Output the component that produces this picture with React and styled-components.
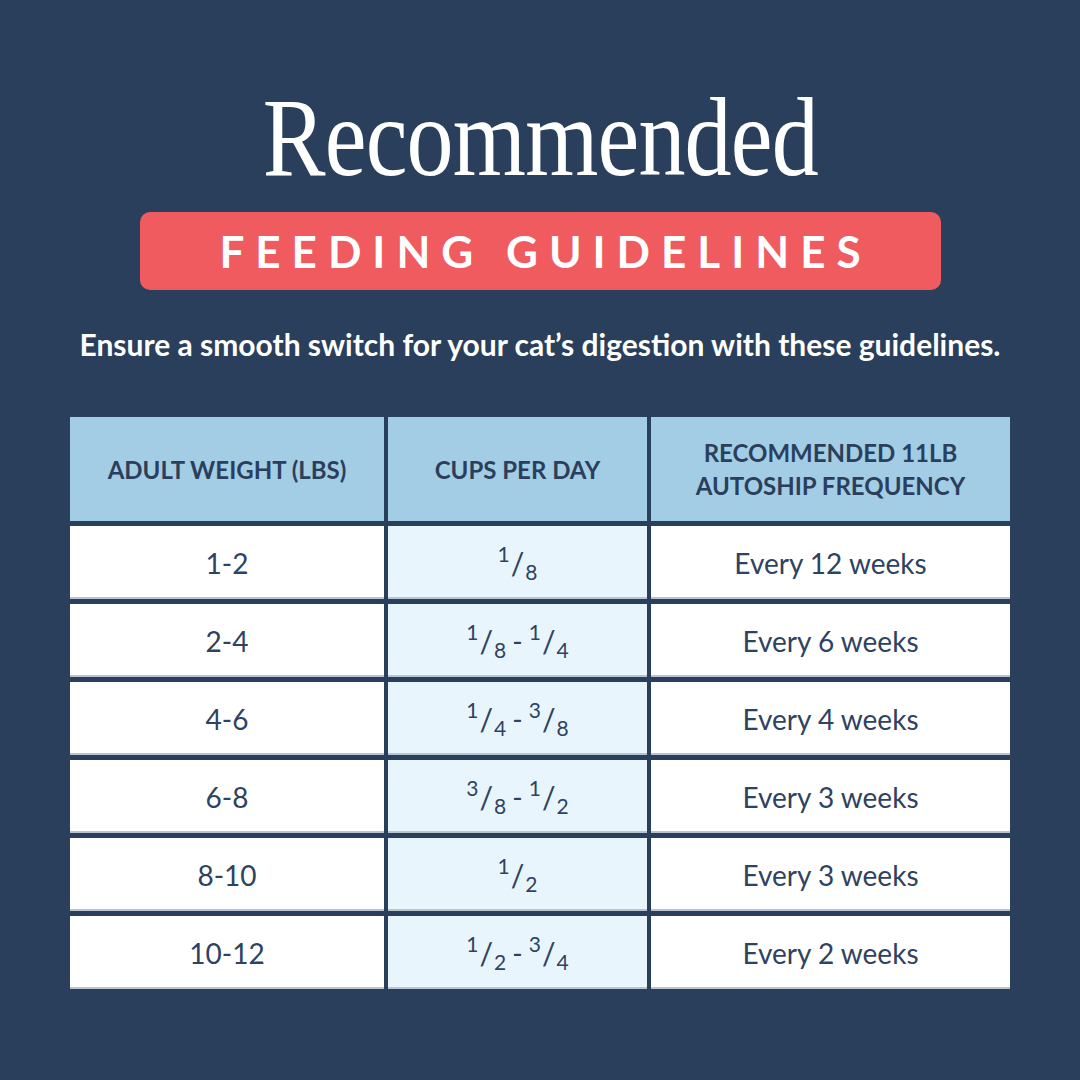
import React from "react";
import styled, { createGlobalStyle } from "styled-components";

const GlobalStyle = createGlobalStyle`
  html, body {
    margin: 0;
    padding: 0;
    background: #2a3f5b;
  }
  * {
    box-sizing: border-box;
  }
`;

const ROWS = [
  { weight: "1-2", cups: [["1", "8"]], freq: "Every 12 weeks" },
  { weight: "2-4", cups: [["1", "8"], ["1", "4"]], freq: "Every 6 weeks" },
  { weight: "4-6", cups: [["1", "4"], ["3", "8"]], freq: "Every 4 weeks" },
  { weight: "6-8", cups: [["3", "8"], ["1", "2"]], freq: "Every 3 weeks" },
  { weight: "8-10", cups: [["1", "2"]], freq: "Every 3 weeks" },
  { weight: "10-12", cups: [["1", "2"], ["3", "4"]], freq: "Every 2 weeks" },
];

const Page = styled.div`
  width: 1080px;
  height: 1080px;
  background: #2a3f5b;
  display: flex;
  flex-direction: column;
  align-items: center;
  padding-top: 81px;
  font-family: Lato, "Open Sans", sans-serif;
`;

const Title = styled.h1`
  margin: 0;
  font-family: "Liberation Serif", "Times New Roman", serif;
  font-weight: 400;
  font-size: 112px;
  line-height: 112px;
  letter-spacing: -1px;
  color: #ffffff;
  transform: scaleX(0.84);
`;

const Banner = styled.div`
  margin-top: 19px;
  width: 801px;
  height: 78px;
  border-radius: 10px;
  background: #ef5b5f;
  display: flex;
  align-items: center;
  justify-content: center;
  padding-left: 11px;
  color: #ffffff;
  font-weight: 700;
  font-size: 44px;
  letter-spacing: 11px;
`;

const Subtitle = styled.p`
  margin: 36px 0 0;
  color: #ffffff;
  font-weight: 700;
  font-size: 30px;
  line-height: 36px;
`;

const Table = styled.div`
  margin-top: 55px;
  display: grid;
  grid-template-columns: 314px 259px 359px;
  grid-template-rows: 104px repeat(6, 73px);
  column-gap: 4px;
  row-gap: 5px;
`;

const HeadCell = styled.div`
  background: #a3cde4;
  color: #2b3f5c;
  font-weight: 700;
  font-size: 24px;
  line-height: 33px;
  display: flex;
  align-items: center;
  justify-content: center;
  text-align: center;
`;

const Cell = styled.div`
  background: ${(p) => (p.$tint ? "#e9f5fd" : "#ffffff")};
  box-shadow: inset 0 -2px 0 #b8c4d1;
  color: #2e4261;
  font-size: 28px;
  display: flex;
  align-items: center;
  justify-content: center;
`;

const Frac = styled.span`
  display: inline-flex;
  align-items: center;
`;

const Num = styled.span`
  font-size: 21px;
  position: relative;
  top: -9px;
`;

const Den = styled.span`
  font-size: 21px;
  position: relative;
  top: 9px;
`;

const Slash = styled.span`
  font-size: 30px;
  margin: 0 1px;
`;

const Dash = styled.span`
  margin: 0 6px;
`;

function Fraction({ n, d }) {
  return (
    <Frac>
      <Num>{n}</Num>
      <Slash>/</Slash>
      <Den>{d}</Den>
    </Frac>
  );
}

export default function App() {
  return (
    <Page>
      <GlobalStyle />
      <Title>Recommended</Title>
      <Banner>FEEDING GUIDELINES</Banner>
      <Subtitle>
        Ensure a smooth switch for your cat’s digestion with these guidelines.
      </Subtitle>
      <Table>
        <HeadCell>ADULT WEIGHT (LBS)</HeadCell>
        <HeadCell>CUPS PER DAY</HeadCell>
        <HeadCell>
          RECOMMENDED 11LB
          <br />
          AUTOSHIP FREQUENCY
        </HeadCell>
        {ROWS.map((row) => (
          <React.Fragment key={row.weight}>
            <Cell>{row.weight}</Cell>
            <Cell $tint>
              {row.cups.map(([n, d], i) => (
                <React.Fragment key={i}>
                  {i > 0 && <Dash>-</Dash>}
                  <Fraction n={n} d={d} />
                </React.Fragment>
              ))}
            </Cell>
            <Cell>{row.freq}</Cell>
          </React.Fragment>
        ))}
      </Table>
    </Page>
  );
}
